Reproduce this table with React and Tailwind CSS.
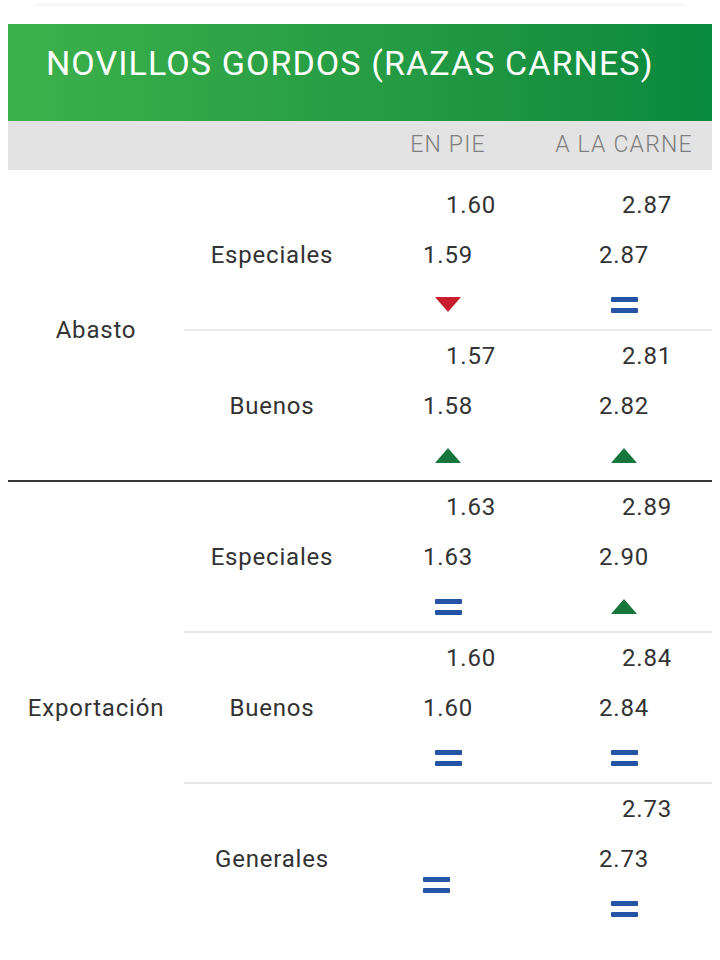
const groups = [
  {
    name: 'Abasto',
    rows: [
      { name: 'Especiales', pie: ['1.60', '1.59', 'down'], carne: ['2.87', '2.87', 'eq'] },
      { name: 'Buenos', pie: ['1.57', '1.58', 'up'], carne: ['2.81', '2.82', 'up'] },
    ],
  },
  {
    name: 'Exportación',
    rows: [
      { name: 'Especiales', pie: ['1.63', '1.63', 'eq'], carne: ['2.89', '2.90', 'up'] },
      { name: 'Buenos', pie: ['1.60', '1.60', 'eq'], carne: ['2.84', '2.84', 'eq'] },
      { name: 'Generales', pie: null, carne: ['2.73', '2.73', 'eq'] },
    ],
  },
]

function Trend({ kind }) {
  if (kind === 'up') {
    return (
      <svg width="26" height="15" viewBox="0 0 26 15">
        <polygon points="13,0 26,15 0,15" fill="#17763c" />
      </svg>
    )
  }
  if (kind === 'down') {
    return (
      <svg width="26" height="15" viewBox="0 0 26 15">
        <polygon points="0,0 26,0 13,15" fill="#c81d2e" />
      </svg>
    )
  }
  return (
    <div className="flex flex-col gap-[6px]">
      <div className="h-[5px] w-[27px] rounded-[1px] bg-[#2553a6]" />
      <div className="h-[5px] w-[27px] rounded-[1px] bg-[#2553a6]" />
    </div>
  )
}

function ValueCell({ data }) {
  const [prev, curr, trend] = data
  return (
    <div className="flex flex-col">
      <div className="flex h-[50px] items-center justify-center pl-[46px]">{prev}</div>
      <div className="flex h-[50px] items-center justify-center">{curr}</div>
      <div className="flex h-[49px] items-center justify-center">
        <Trend kind={trend} />
      </div>
    </div>
  )
}

export default function App() {
  return (
    <div className="min-h-[960px] bg-white font-['Roboto',sans-serif] text-[#333]">
      <div className="mx-[35px] h-[3px] bg-white shadow-[0_2px_4px_rgba(0,0,0,0.06)]" />
      <div className="px-[8px] pt-[21px]">
        <div className="h-[97px] bg-linear-to-r from-[#3cb14b] to-[#07893d] pl-[38px] pt-[19px]">
          <h1 className="text-[34px] leading-[40px] tracking-[1.1px] text-white">
            NOVILLOS GORDOS (RAZAS CARNES)
          </h1>
        </div>
        <div className="grid h-[49px] grid-cols-4 items-center bg-[#e3e3e3] text-[23px] font-light tracking-[1.2px] text-[#7d7d7d]">
          <div />
          <div />
          <div className="text-center">EN PIE</div>
          <div className="text-center">A LA CARNE</div>
        </div>

        <div className="pt-[10px] text-[24px] tracking-[0.8px]">
          {groups.map((g, gi) => (
            <div
              key={g.name}
              className={gi === 0 ? 'flex border-b-2 border-[#3a3a3a]' : 'flex'}
            >
              <div className="flex w-1/4 items-center justify-center">{g.name}</div>
              <div className="flex w-3/4 flex-col">
                {g.rows.map((r, ri) => (
                  <div
                    key={r.name}
                    className={
                      ri < g.rows.length - 1
                        ? 'grid grid-cols-3 border-b-2 border-[#e8e8e8]'
                        : 'grid grid-cols-3'
                    }
                  >
                    <div className="flex items-center justify-center">{r.name}</div>
                    {r.pie ? (
                      <ValueCell data={r.pie} />
                    ) : (
                      <div className="flex justify-center pr-[24px] pt-[93px]">
                        <Trend kind="eq" />
                      </div>
                    )}
                    <ValueCell data={r.carne} />
                  </div>
                ))}
              </div>
            </div>
          ))}
        </div>
      </div>
    </div>
  )
}
